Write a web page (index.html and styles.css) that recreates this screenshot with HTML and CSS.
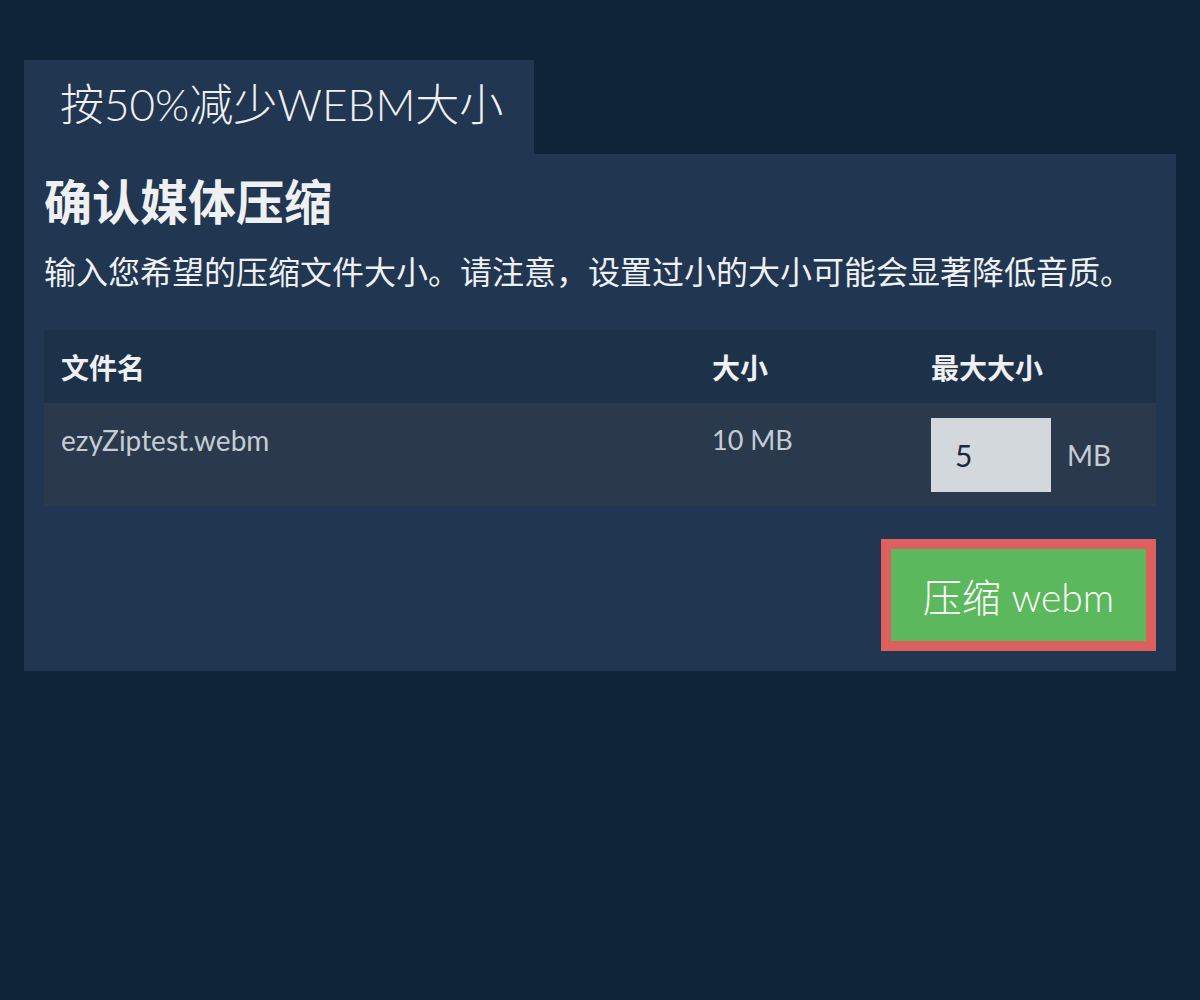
FILE: index.html
```html
<!DOCTYPE html>
<html lang="zh-CN">

<head>
  <meta charset="UTF-8">
  <meta name="viewport" content="width=device-width, initial-scale=1.0">
  <title>按50%减少WEBM大小</title>
  <link rel="stylesheet" href="styles.css">
</head>

<body>

  <div class="tab">按50%减少WEBM大小</div>

  <div class="panel">
    <h2>确认媒体压缩</h2>
    <p>输入您希望的压缩文件大小。请注意，设置过小的大小可能会显著降低音质。</p>

    <table class="files">
      <thead>
        <tr>
          <th class="col-name">文件名</th>
          <th class="col-size">大小</th>
          <th class="col-max">最大大小</th>
        </tr>
      </thead>
      <tbody>
        <tr>
          <td class="file-name">ezyZiptest.webm</td>
          <td>10 MB</td>
          <td>
            <div class="max-size">
              <input type="text" value="5">
              <span>MB</span>
            </div>
          </td>
        </tr>
      </tbody>
    </table>

    <div class="actions">
      <button>压缩 webm</button>
    </div>
  </div>

</body>

</html>
```

FILE: styles.css
```css
body {
  margin: 0;
  padding: 60px 24px;
  background-color: #0f2339;
  font-family: Lato, "Noto Sans CJK SC", sans-serif;
  color: #eef0f2;
}

.tab {
  display: inline-block;
  height: 94px;
  padding: 0 31px 0 36px;
  line-height: 88px;
  font-size: 44px;
  font-weight: 300;
  background-color: #213650;
}

.panel {
  padding: 20px 20px 20px;
  background-color: #213650;
}

h2 {
  margin: 0 0 20px;
  font-size: 48px;
  line-height: 56px;
  font-weight: 700;
}

p {
  margin: 0 0 36px;
  font-size: 32px;
  line-height: 44px;
}

.files {
  width: 100%;
  border-collapse: collapse;
}

.files th {
  height: 73px;
  padding: 0 17px;
  text-align: left;
  font-size: 28px;
  font-weight: 700;
  background-color: #1d3149;
}

.col-name {
  width: 617px;
}

.col-size {
  width: 185px;
}

.files td {
  padding: 15px 17px 14px;
  vertical-align: top;
  font-size: 27px;
  line-height: 44px;
  color: #c5ccd3;
  background-color: #2a3a4c;
}

.files .file-name {
  font-size: 28px;
}

.max-size {
  display: flex;
  align-items: center;
  gap: 16px;
  font-size: 28px;
}

.max-size input {
  width: 120px;
  height: 74px;
  padding: 0 24px;
  box-sizing: border-box;
  border: none;
  font-family: Lato, sans-serif;
  font-size: 30px;
  color: #1b2a3a;
  background-color: #d3d8dd;
}

.actions {
  display: flex;
  justify-content: flex-end;
  margin-top: 33px;
}

button {
  width: 275px;
  height: 112px;
  padding: 0;
  border: 10px solid #dc605e;
  font-family: Lato, "Noto Sans CJK SC", sans-serif;
  font-size: 39px;
  font-weight: 300;
  color: #ffffff;
  background-color: #5cb85c;
  cursor: pointer;
}
```
